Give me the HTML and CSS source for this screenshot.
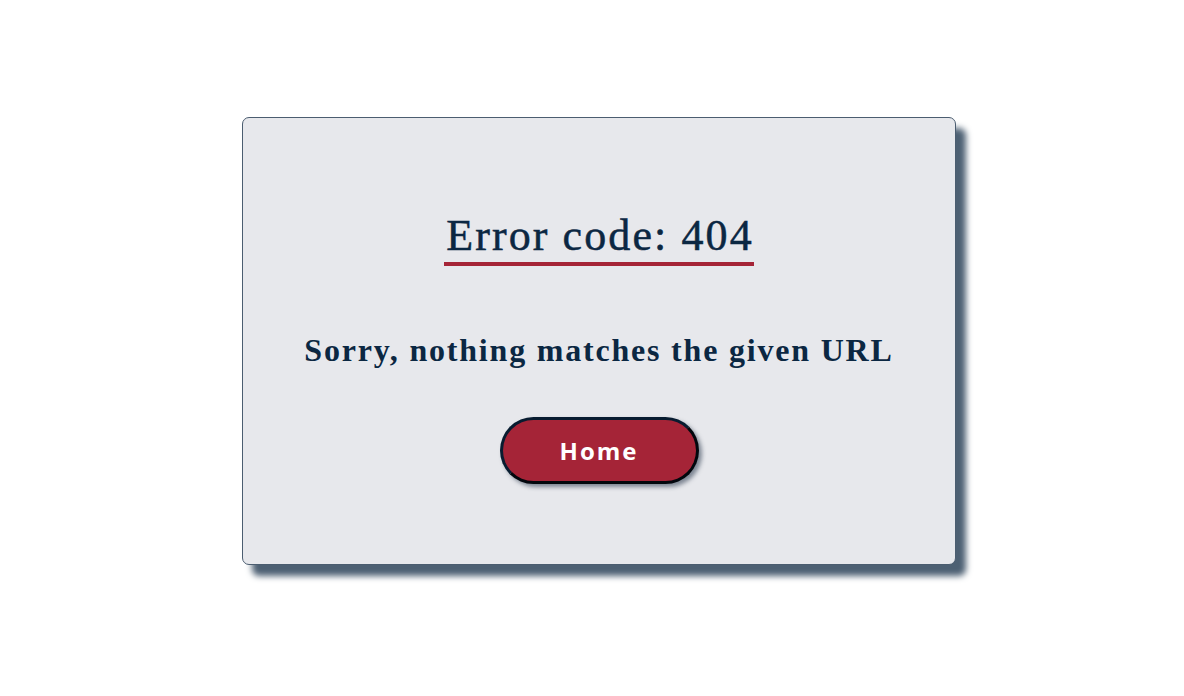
FILE: index.html
```html
<!DOCTYPE html>
<html lang="en">
<head>
<meta charset="utf-8">
<title>404</title>
<link rel="stylesheet" href="styles.css">
</head>
<body>
<header class="topbar"></header>
<main class="page">
  <section class="card">
    <h1 class="title">Error code: 404</h1>
    <p class="message">Sorry, nothing matches the given URL</p>
    <a class="home-btn" href="#">Home</a>
  </section>
</main>
</body>
</html>
```
FILE: styles.css
```css
html, body {
  margin: 0;
  padding: 0;
  background: #ffffff;
}
body {
  font-family: "Liberation Serif", "DejaVu Serif", serif;
  color: #0b2742;
  min-height: 100vh;
}
.topbar {
  height: 0;
  box-shadow: 0 1px 8px rgba(0, 0, 0, 0.12);
}
.page {
  box-sizing: border-box;
  min-height: 100vh;
  display: flex;
  justify-content: center;
  align-items: flex-start;
  padding: 117px 0 40px 14px;
}
.card {
  box-sizing: border-box;
  width: 714px;
  height: 448px;
  background: #e7e8ec;
  border: 1px solid #4b5d70;
  border-radius: 7px;
  box-shadow: 10px 11px 6px #4d6073;
  display: flex;
  flex-direction: column;
  align-items: center;
  padding-top: 96px;
}
.title {
  margin: 0;
  font-size: 44px;
  font-weight: 400;
  line-height: 44px;
  letter-spacing: 2.1px;
  padding-bottom: 4px;
  border-bottom: 4px solid #a52437;
  text-indent: 2px;
  -webkit-text-stroke: 0.5px #0b2742;
}
.message {
  margin: 66px 0 0;
  font-size: 32px;
  font-weight: 700;
  letter-spacing: 1.8px;
  line-height: 36px;
}
.home-btn {
  margin-top: 49px;
  box-sizing: border-box;
  width: 199px;
  height: 67px;
  display: flex;
  align-items: center;
  justify-content: center;
  background: #a52437;
  border: 3px solid #081c30;
  border-bottom-color: #02070d;
  border-right-color: #02070d;
  border-radius: 34px;
  box-shadow: 3px 3px 4px rgba(40, 55, 75, 0.55);
  color: #ffffff;
  text-decoration: none;
  font-family: "Open Sans", "Liberation Sans", sans-serif;
  font-weight: 700;
  font-size: 24px;
  letter-spacing: 2px;
}
```
